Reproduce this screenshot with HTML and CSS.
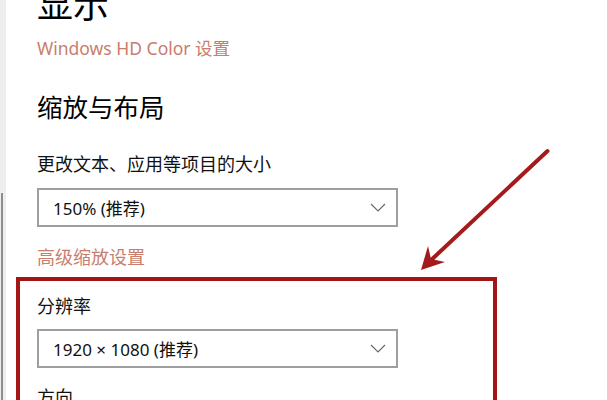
FILE: index.html
```html
<!DOCTYPE html>
<html lang="zh-CN">
<head>
<meta charset="utf-8">
<link rel="stylesheet" href="styles.css">
</head>
<body>
<div class="page">
  <div class="sidebar"><div class="thumb"></div></div>
  <div class="main">
    <h1 class="title">显示</h1>
    <a class="link link-hd">Windows HD Color 设置</a>
    <h2 class="heading">缩放与布局</h2>
    <div class="label label-first">更改文本、应用等项目的大小</div>
    <div class="select">
      <span class="select-text">150% (推荐)</span>
      <svg class="chev" width="16" height="9" viewBox="0 0 16 9"><path d="M1 1 L8 8 L15 1" fill="none" stroke="#6a6a6a" stroke-width="1.2"/></svg>
    </div>
    <a class="link link-adv">高级缩放设置</a>
    <div class="highlight">
      <div class="label label-res">分辨率</div>
      <div class="select">
        <span class="select-text">1920 × 1080 (推荐)</span>
        <svg class="chev" width="16" height="9" viewBox="0 0 16 9"><path d="M1 1 L8 8 L15 1" fill="none" stroke="#6a6a6a" stroke-width="1.2"/></svg>
      </div>
      <div class="label label-dir">方向</div>
    </div>
  </div>
</div>
<svg class="arrow" width="607" height="400" viewBox="0 0 607 400">
  <line x1="547.5" y1="151" x2="429" y2="262" stroke="#a51a1a" stroke-width="4" stroke-linecap="round"/>
  <polygon points="421,270 428,246 431,259 445,262" fill="#a51a1a"/>
</svg>
</body>
</html>
```
FILE: styles.css
```css
html, body {
  margin: 0;
  padding: 0;
  background: #ffffff;
  overflow: hidden;
}
body {
  width: 607px;
  height: 400px;
  position: relative;
  font-family: "Noto Sans", "Noto Sans CJK SC", sans-serif;
  color: #111;
}
.page {
  display: flex;
  height: 400px;
}
.sidebar {
  width: 6px;
  flex: none;
  background: #eeeeee;
  padding-top: 193px;
  box-sizing: border-box;
  padding-left: 1px;
}
.thumb {
  width: 2px;
  height: 207px;
  background: #8c8c8c;
}
.main {
  flex: 1;
  padding-left: 31px;
  display: flex;
  flex-direction: column;
  align-items: flex-start;
}
.main > *,
.highlight > * {
  flex-shrink: 0;
}
.title {
  margin: -13px 0 0 0;
  font-size: 36px;
  line-height: 36px;
  font-weight: 400;
  color: #000;
}
.link {
  color: #c97d6c;
  font-size: 17.5px;
  line-height: 24px;
}
.link-hd {
  margin-top: 13px;
}
.heading {
  margin: 31px 0 0 0;
  font-size: 25.5px;
  line-height: 32px;
  font-weight: 400;
  color: #000;
}
.label {
  font-size: 18px;
  line-height: 24px;
  color: #111;
}
.label-first {
  margin-top: 29px;
}
.select {
  margin-top: 12px;
  width: 361px;
  height: 39px;
  box-sizing: border-box;
  border: 2px solid #9e9e9e;
  display: flex;
  align-items: center;
  justify-content: space-between;
  padding: 0 10px 0 14px;
  background: #fff;
}
.select-text {
  font-size: 17px;
  color: #111;
}
.chev {
  display: block;
}
.link-adv {
  margin-top: 18px;
  font-size: 18px;
}
.highlight {
  margin-top: 8px;
  margin-left: -21px;
  width: 481px;
  flex: none;
  box-sizing: border-box;
  border: 4px solid #a31616;
  border-bottom: none;
  padding: 13px 0 0 17px;
  display: flex;
  flex-direction: column;
  align-items: flex-start;
}
.label-res {
  margin-top: 0;
}
.highlight .select {
  margin-top: 11px;
}
.label-dir {
  margin-top: 17px;
}
.arrow {
  position: absolute;
  left: 0;
  top: 0;
  pointer-events: none;
}
```
